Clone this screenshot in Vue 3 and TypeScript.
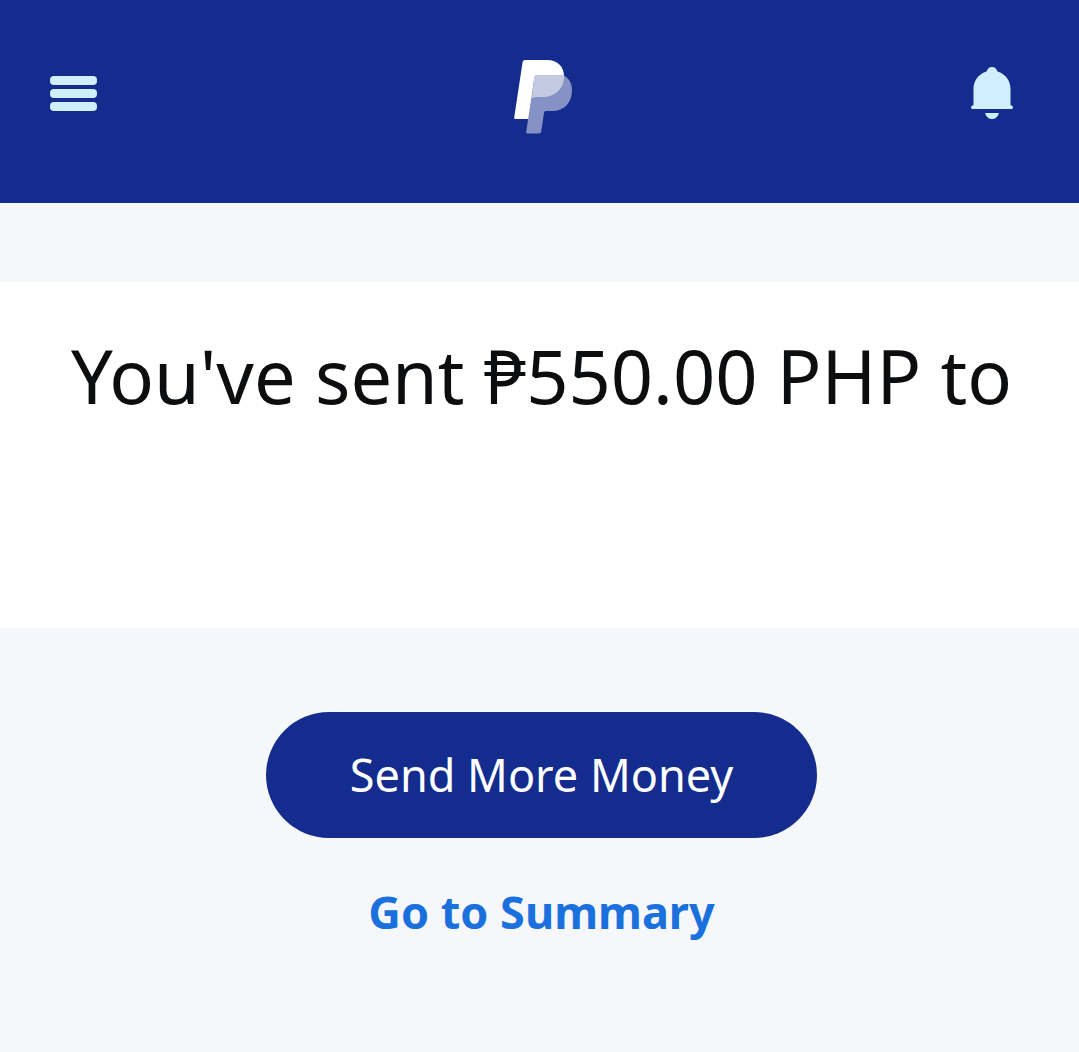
<script setup lang="ts">
const amount: string = '₱550.00 PHP'
</script>

<template>
  <div class="page">
    <header class="bar">
      <button class="icon-button" type="button" aria-label="Menu">
        <svg width="48" height="36" viewBox="0 0 48 36" fill="#cfefff" aria-hidden="true">
          <rect x="0" y="0" width="47" height="9" rx="4" />
          <rect x="0" y="13" width="47" height="9" rx="4" />
          <rect x="0" y="26" width="47" height="9" rx="4" />
        </svg>
      </button>
      <a class="brand" href="#" aria-label="PayPal">
        <svg width="60" height="75" viewBox="14 14 60 75" aria-hidden="true">
          <path
            fill="#fff"
            d="M25 15H47C58 15 64 22 64 31C64 43 56 52 43 52H34L30.700 74H15.300Q14 74 14.200 72.500L22.600 17Q23 15 25 15Z"
          />
          <path
            fill="#8691c6"
            d="M37 30H63C69 33 72 38.500 72 45C72 58 64 66 52 66H46Q44.300 66 44 68L41.200 86.500Q41 88.500 39 88.500H27.500Q26 88.500 26.200 87L34.400 32Q34.700 30 37 30Z"
          />
          <path
            fill="#c5cae3"
            d="M37 30H63.900C65 42 56 52 43 52H36Q33 52 31.800 54L34.400 32Q34.700 30 37 30Z"
          />
        </svg>
      </a>
      <button class="icon-button" type="button" aria-label="Notifications">
        <svg width="42" height="56" viewBox="0 0 42 56" fill="#cfefff" aria-hidden="true">
          <path
            d="M21 1C24 1 25.500 3 26.500 5.500C34 8 39.500 14 39.500 23V39Q42 39.500 42 41.500Q42 43 40 43H2Q0 43 0 41.500Q0 39.500 2.500 39V23C2.500 14 8 8 15.500 5.500C16.500 3 18 1 21 1Z"
          />
          <path d="M14 47H28Q26 53 21 53Q16 53 14 47Z" />
        </svg>
      </button>
    </header>

    <main>
      <section class="message">
        <h1>You've sent {{ amount }} to</h1>
      </section>
      <div class="actions">
        <button class="primary" type="button">Send More Money</button>
        <a class="summary" href="#">Go to Summary</a>
      </div>
    </main>
  </div>
</template>

<style>
body {
  background: #f5f7fb;
}
</style>

<style scoped>
.page {
  font-family: 'Noto Sans', 'Open Sans', sans-serif;
  background: #f5f7fb;
}

.bar {
  display: grid;
  grid-template-columns: 1fr auto 1fr;
  align-items: center;
  box-sizing: border-box;
  height: 203px;
  padding: 0 66px 16px 50px;
  background: #142c8e;
}

.icon-button {
  display: flex;
  padding: 0;
  border: 0;
  background: none;
  cursor: pointer;
}

.icon-button:last-child {
  justify-self: end;
}

.brand {
  display: flex;
  padding: 6px 0 0 24px;
}

.message {
  margin-top: 79px;
  min-height: 346px;
  box-sizing: border-box;
  padding: 44px 16px 44px 20px;
  background: #fff;
  text-align: center;
}

h1 {
  margin: 0;
  color: #0c0d0f;
  font-size: 74px;
  font-weight: 400;
  line-height: 100px;
}

.actions {
  display: flex;
  flex-direction: column;
  align-items: center;
  gap: 42px;
  padding: 84px 16px 84px 20px;
}

.primary {
  height: 126px;
  padding: 0 84px;
  border: 0;
  border-radius: 63px;
  background: #142c8e;
  color: #fff;
  font-family: inherit;
  font-size: 45px;
  line-height: 64px;
  cursor: pointer;
}

.summary {
  color: #1a70dc;
  font-size: 45px;
  font-weight: 700;
  line-height: 64px;
  text-decoration: none;
}
</style>
